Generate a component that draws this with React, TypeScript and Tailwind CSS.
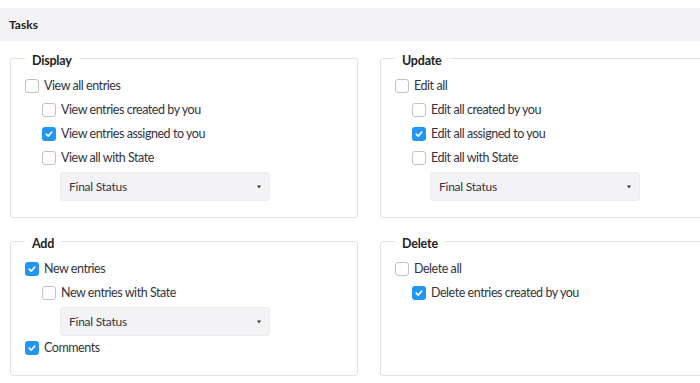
import React from "react";

const font = { fontFamily: "Lato, 'Liberation Sans', sans-serif" };

function Check({ checked }: { checked?: boolean }) {
  return checked ? (
    <span className="flex h-[14px] w-[14px] shrink-0 items-center justify-center rounded-[3px] bg-[#2196f3]">
      <svg width="10" height="10" viewBox="0 0 10 10" fill="none">
        <path d="M2.2 5.2 L4.2 7.1 L7.8 3" stroke="white" strokeWidth="1.6" strokeLinecap="round" strokeLinejoin="round" />
      </svg>
    </span>
  ) : (
    <span className="block h-[14px] w-[14px] shrink-0 rounded-[3px] border border-[#c2c2c2] bg-white" />
  );
}

function Row({ label, checked, sub }: { label: string; checked?: boolean; sub?: boolean }) {
  return (
    <div className={`flex h-6 items-center gap-[5px] ${sub ? "pl-[17px]" : ""}`}>
      <Check checked={checked} />
      <span className="text-[12.5px] tracking-[-0.45px] text-[#333340]">{label}</span>
    </div>
  );
}

function Select() {
  return (
    <div className="ml-[35px] mt-[2px] flex h-[29px] w-[210px] items-center justify-between rounded-[3px] border border-[#ececef] bg-[#f3f3f5] pl-[8px] pr-[8px]">
      <span className="text-[12px] tracking-[-0.25px] text-[#333340]">Final Status</span>
      <svg width="4" height="4" viewBox="0 0 4 4">
        <path d="M0 0.5 L4 0.5 L2 3.5 Z" fill="#333" />
      </svg>
    </div>
  );
}

function Box({ title, children, pb }: { title: string; children: React.ReactNode; pb: string }) {
  return (
    <fieldset className={`rounded-[3px] border border-[#e2e2e4] px-[14px] ${pb}`}>
      <legend className="px-[7px] pt-[6px] text-[12.5px] font-bold leading-4 tracking-[-0.2px] text-[#222]">{title}</legend>
      <div className="pt-[5px]">{children}</div>
    </fieldset>
  );
}

export default function App() {
  return (
    <div className="h-[383px] w-[700px] overflow-hidden bg-white" style={font}>
      <div className="w-[740px] pt-2">
        <div className="flex h-[33px] items-center bg-[#f3f3f5] pl-[9px]">
          <span className="text-[12px] font-bold text-[#222]">Tasks</span>
        </div>
        <div className="grid grid-cols-[348px_348px] gap-x-[22px] gap-y-[12px] px-[10px] pt-[6px]">
          <Box title="Display" pb="pb-[16px]">
            <Row label="View all entries" />
            <Row label="View entries created by you" sub />
            <Row label="View entries assigned to you" checked sub />
            <Row label="View all with State" sub />
            <Select />
          </Box>
          <Box title="Update" pb="pb-[16px]">
            <Row label="Edit all" />
            <Row label="Edit all created by you" sub />
            <Row label="Edit all assigned to you" checked sub />
            <Row label="Edit all with State" sub />
            <Select />
          </Box>
          <Box title="Add" pb="pb-[15px]">
            <Row label="New entries" checked />
            <Row label="New entries with State" sub />
            <Select />
            <Row label="Comments" checked />
          </Box>
          <Box title="Delete" pb="pb-[15px]">
            <Row label="Delete all" />
            <Row label="Delete entries created by you" checked sub />
          </Box>
        </div>
      </div>
    </div>
  );
}
